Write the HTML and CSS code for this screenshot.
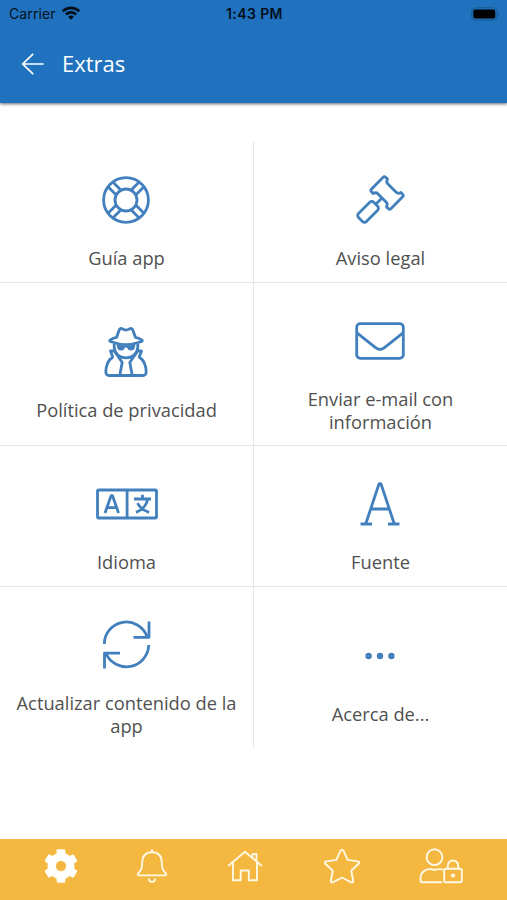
FILE: index.html
```html
<!DOCTYPE html>
<html lang="es">
<head>
<meta charset="utf-8">
<title>Extras</title>
<link rel="stylesheet" href="styles.css">
</head>
<body>
<div class="screen">
  <header class="header">
    <div class="status">
      <div class="carrier"><span>Carrier</span>
        <svg width="20" height="16" viewBox="0 0 20 16"><g fill="none" stroke="#04101c" stroke-width="2.7"><path d="M1.7 6.2A11.8 11.8 0 0 1 18.3 6.2"/><path d="M4.9 9.5A7.4 7.4 0 0 1 15.1 9.5"/></g><path d="M10 14.8 7.1 11.9a4.1 4.1 0 0 1 5.8 0z" fill="#04101c"/></svg>
      </div>
      <div class="clock">1:43 PM</div>
      <div class="battery">
        <svg width="30" height="14" viewBox="0 0 30 14"><rect x=".8" y=".8" width="25" height="12.4" rx="3.5" fill="none" stroke="#195891"/><rect x="2.3" y="2.5" width="22" height="9" rx="2" fill="#000"/><path d="M27.4 5v4c1.6-.6 1.6-3.4 0-4z" fill="#195891"/></svg>
      </div>
    </div>
    <div class="titlebar">
      <svg class="back" width="24" height="24" viewBox="0 0 24 24"><path d="M12.2 1.8 1.7 12l10.5 10.2M1.7 12H22.6"/></svg>
      <h1>Extras</h1>
    </div>
  </header>

  <main class="grid">
    <a class="cell">
      <svg class="icon" viewBox="-46 -46 92 92"><circle r="22.4"/><circle r="11"/><path d="M-18-13.2-10-5.2M-13.2-18-5.2-10M18-13.2 10-5.2M13.2-18 5.2-10M-18 13.2-10 5.2M-13.2 18-5.2 10M18 13.2 10 5.2M13.2 18 5.2 10"/></svg>
      <span>Guía app</span>
    </a>
    <a class="cell">
      <svg class="icon" viewBox="-46 -46 92 92"><g transform="translate(7 -7) rotate(45)"><path d="M-11.5-10.2H-9.5Q-8.5-7-6-7H6Q8.5-7 9.5-10.2H11.5Q13.8-10.2 13.8-8V8Q13.8 10.2 11.5 10.2H9.5Q8.5 7 6 7H-6Q-8.5 7-9.5 10.2H-11.5Q-13.8 10.2-13.8 8V-8Q-13.8-10.2-11.5-10.2Z"/><path d="M0 7V16"/><rect x="-5.6" y="16" width="11.2" height="21.5" rx="2.8"/></g></svg>
      <span>Aviso legal</span>
    </a>
    <a class="cell">
      <svg class="icon" viewBox="-46 -46 92 92"><path d="M-16.2-11.7Q-13.5-13.8-9.5-14.6L-6.8-22Q-5.8-24.2-3.6-23.2Q0-20.8 3.6-23.2Q5.8-24.2 6.8-22L9.5-14.6Q13.5-13.8 16.2-11.7Q16.5-10.8 15-10.2Q7-7.4 0-7.4T-15-10.2Q-16.5-10.8-16.2-11.7Z"/><path d="M-11.8-8V-4.5Q-10.7 5.5 0 5.8Q10.7 5.5 11.8-4.5V-8"/><path class="solid" d="M-9.5-7.5Q0-5.5 9.5-7.5L8.7-3.8Q7.8-1.3 4.5-1.5Q1.8-1.8 1-4.5H-1Q-1.8-1.8-4.5-1.5Q-7.8-1.3-8.7-3.8Z"/><path d="M-11.5-1H-15.5L-13.3 5Q-20 9.8-20.2 20Q-20 23.5-17 23.5H17Q20 23.5 20.2 20Q20 9.8 13.3 5L15.5-1H11.5L3.8 10.5L6.2 23.3M-11.5-1-3.8 10.5-6.2 23.3"/></svg>
      <span>Política de privacidad</span>
    </a>
    <a class="cell">
      <svg class="icon" viewBox="-46 -46 92 92"><rect x="-23.3" y="-17.3" width="46.6" height="34.6" rx="3.5"/><path d="M-23-8.2-4.5 6.7Q0 10.3 4.5 6.7L23-8.2"/></svg>
      <span>Enviar e-mail con información</span>
    </a>
    <a class="cell">
      <svg class="icon" viewBox="-46 -46 92 92"><rect x="-28.5" y="-14" width="59" height="28" rx="1.2"/><path d="M1.1-14V14"/><path d="M-21 9-14.9-8.3H-13.5L-7.4 9M-19 3.7H-9.5M8-5H25M16.5-9.2V-5M21.7-4.5Q19.3 4.8 10 8.4M11.5-.8Q15 6 23.2 8.4"/></svg>
      <span>Idioma</span>
    </a>
    <a class="cell">
      <svg class="icon" viewBox="-46 -46 92 92"><path d="M-14.3 20-1.2-19.5Q0-21.8 1.2-19.5L14.3 20M-9 5H9M-19.5 20H-8M8 20H19.5"/></svg>
      <span>Fuente</span>
    </a>
    <a class="cell">
      <svg class="icon" viewBox="-46 -46 92 92"><path d="M-21.7-1A22 22 0 0 1 21-8.5M23-23.5V-7.7H7.5M22.7 0A22.3 22.3 0 0 1-20 8.5M-21.5 23.5V8.2H-6"/></svg>
      <span>Actualizar contenido de la app</span>
    </a>
    <a class="cell">
      <svg class="icon dots" viewBox="-46 -46 92 92"><circle cx="-11.4" r="3.2"/><circle r="3.2"/><circle cx="11.4" r="3.2"/></svg>
      <span>Acerca de...</span>
    </a>
  </main>

  <nav class="tabs">
    <svg class="gear" width="36" height="36" viewBox="-18 -18 36 36"><path fill-rule="evenodd" d="M-3.7-16.3H3.7L4.2-12.2Q6.5-11.4 8.4-9.7L12.4-11.3 16-5 12.8-2.5Q13.2 0 12.8 2.5L16 5 12.4 11.3 8.4 9.7Q6.5 11.4 4.2 12.2L3.7 16.3H-3.7L-4.2 12.2Q-6.5 11.4-8.4 9.7L-12.4 11.3-16 5-12.8 2.5Q-13.2 0-12.8-2.5L-16-5-12.4-11.3-8.4-9.7Q-6.5-11.4-4.2-12.2ZM0-5.5A5.5 5.5 0 1 0 0 5.5A5.5 5.5 0 1 0 0-5.5Z"/></svg>
    <svg width="36" height="36" viewBox="-18 -18 36 36"><path d="M0-16V-14M-9.8-3Q-9.8-13.7 0-13.7T9.8-3Q9.8 4 13.5 6.8Q15.4 9.4 12.7 9.4H-12.7Q-15.4 9.4-13.5 6.8Q-9.8 4-9.8-3ZM-3.2 13.2Q-2.6 15.9 0 15.9T3.2 13.2"/></svg>
    <svg width="36" height="36" viewBox="-18 -18 36 36"><path d="M-16.3-.5 0-14.3 16.3-.5M-12-3.7V14.2H-4.3V4.5H3.8V14.2H12V-3.7M7.5-8V-12H11.5V-5"/></svg>
    <svg class="star" width="38" height="36" viewBox="-19 -18 38 36"><path d="M-1.5-15.3Q0-17.5 1.5-15.3L5.6-6.1 15.8-4.6Q18-4 16.6-2.2L9.2 4.8 11.2 14.8Q11.3 17.1 9.2 16.3L0 11.5-9.2 16.3Q-11.3 17.1-11.2 14.8L-9.2 4.8-16.6-2.2Q-18-4-15.8-4.6L-5.6-6.1Z"/></svg>
    <svg width="46" height="36" viewBox="-23 -18 46 36"><circle cx="-6.5" cy="-8.8" r="7.9"/><path d="M1.5 3.6Q-1 2.7-3.5 3.4Q-6.5 4.2-9.5 3.3C-15.5 2.3-20.5 6.5-20.5 12V14.2Q-20.5 16.2-18.5 16.2H.5"/><rect x="3.2" y="2.8" width="17.6" height="13.4" rx="1.8"/><path d="M6.8 2.6V-.3A5.2 5.2 0 0 1 17.2-.3V2.6"/><circle class="keyhole" cx="12" cy="9.5" r="2.1"/></svg>
  </nav>
</div>
</body>
</html>
```
FILE: styles.css
```css
* { box-sizing: border-box; }

body {
  margin: 0;
  background: #fff;
  color: #505050;
  font-family: "Open Sans", "Noto Sans", sans-serif;
}

.screen {
  display: flex;
  flex-direction: column;
  width: 507px;
  height: 900px;
  overflow: hidden;
}

.header {
  flex: none;
  height: 103px;
  background: #2072be;
  box-shadow: 0 1px 3px rgba(0, 0, 0, .6);
}

.status {
  display: grid;
  grid-template-columns: 1fr auto 1fr;
  align-items: center;
  height: 27px;
  padding: 0 7px 0 9px;
  color: #04101c;
  font: 14px/27px Inter, "Liberation Sans", sans-serif;
}

.carrier { display: flex; align-items: center; gap: 5px; letter-spacing: .1px; }
.carrier svg { margin-top: -2px; }
.clock { font-weight: 600; letter-spacing: .4px; }
.battery { display: flex; justify-content: flex-end; }
.battery svg { margin-right: -1px; }

.titlebar {
  display: flex;
  align-items: center;
  gap: 17px;
  height: 76px;
  padding: 0 0 3px 21px;
  color: #fff;
}

.titlebar h1 {
  margin: -1px 0 0;
  font-size: 22px;
  font-weight: 400;
  line-height: 30px;
}

.back { fill: none; stroke: #fff; stroke-width: 1.7; }

.grid {
  display: grid;
  grid-template-columns: 254px 253px;
  grid-template-rows: 141px 163px 141px 161px;
  margin-top: 39px;
}

.cell {
  display: flex;
  flex-direction: column;
  align-items: center;
  justify-content: center;
  border-bottom: 1px solid #e6e6e6;
  padding: 0 12px;
  font-size: 18.3px;
  line-height: 23.5px;
  text-align: center;
}

.cell:nth-child(odd) { border-right: 1px solid #e6e6e6; }
.cell:nth-child(n+7) { padding-top: 1px; border-bottom: 0; }

.icon {
  flex: none;
  width: 92px;
  height: 92px;
  margin-left: -1px;
  fill: none;
  stroke: #427fbd;
  stroke-width: 2.8;
  stroke-linejoin: round;
}

.icon .solid, .dots { fill: #427fbd; stroke: none; }

.tabs {
  display: flex;
  align-items: flex-start;
  height: 61px;
  margin-top: auto;
  padding: 9px 0 0 43px;
  background: #f4b740;
}

.tabs svg {
  flex: none;
  margin-right: 57px;
  fill: none;
  stroke: #fff8e5;
  stroke-width: 1.9;
  stroke-linejoin: round;
  stroke-linecap: round;
}

.tabs svg:nth-child(1) { margin-right: 55px; }
.tabs svg:nth-child(3) { margin-right: 60px; }
.tabs .gear { fill: #fff; stroke: #fff; stroke-width: .8; }
.tabs .keyhole { fill: #fff8e5; stroke: none; }
```
